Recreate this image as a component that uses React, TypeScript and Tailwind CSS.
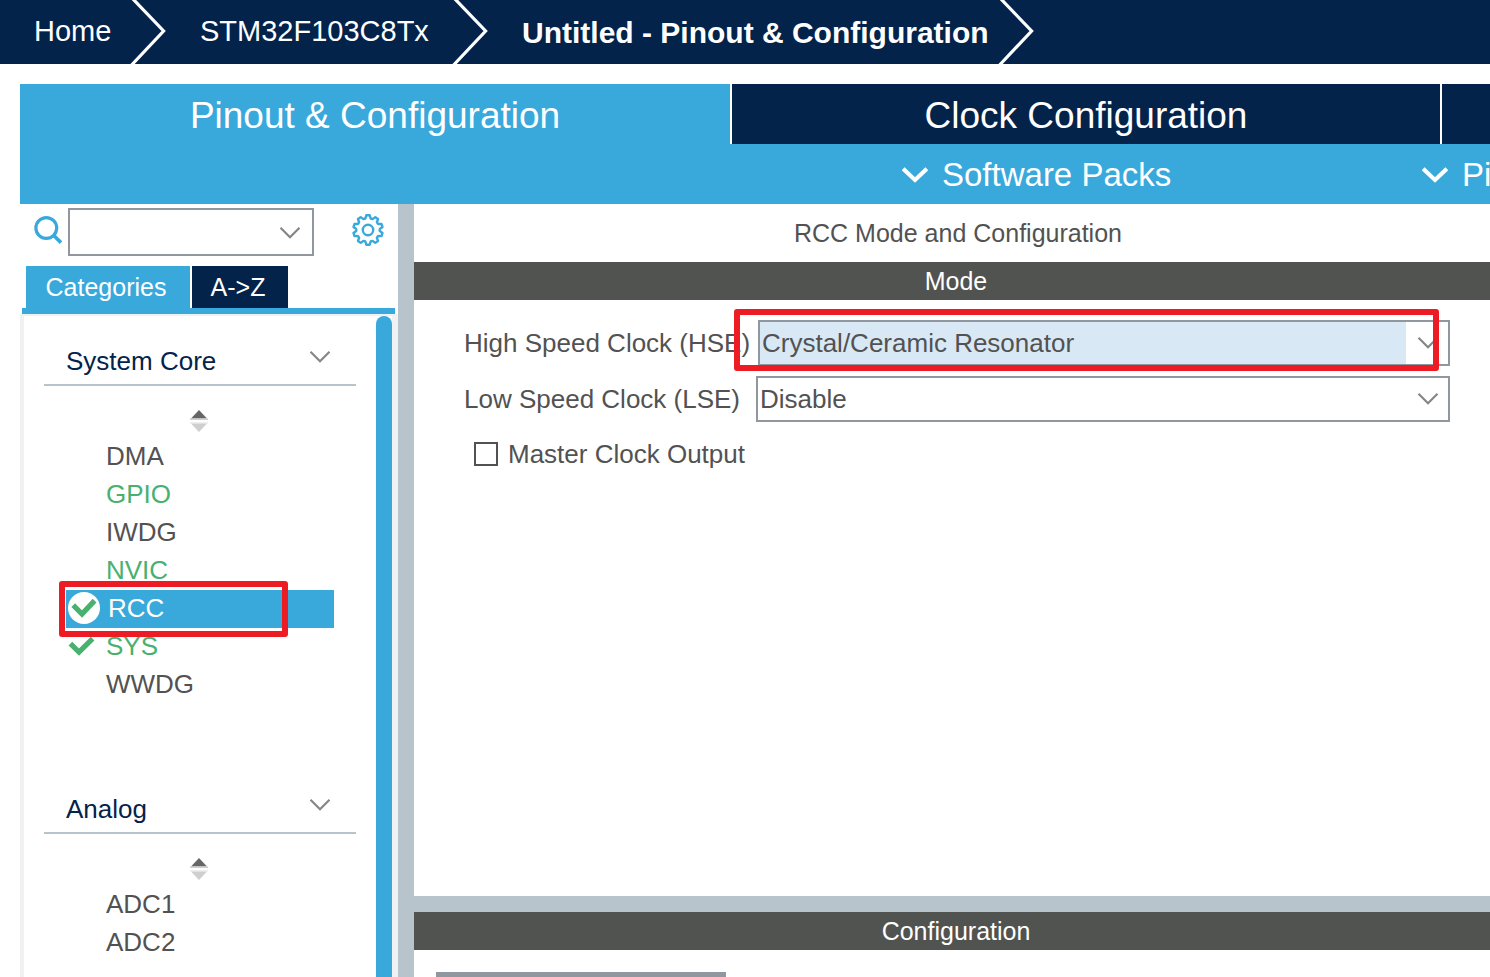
import type { ReactNode } from "react";

const GEAR_TEETH = 10;

function gearPath(center: number, outer: number, inner: number) {
  const step = (Math.PI * 2) / GEAR_TEETH;
  const at = (radius: number, angle: number) =>
    `${(center + radius * Math.sin(angle)).toFixed(2)} ${(center - radius * Math.cos(angle)).toFixed(2)}`;
  const points: string[] = [];
  for (let i = 0; i < GEAR_TEETH; i += 1) {
    const a = i * step;
    points.push(
      at(outer, a - step * 0.18),
      at(outer, a + step * 0.18),
      at(inner, a + step * 0.36),
      at(inner, a + step * 0.64),
    );
  }
  return `M${points.join("L")}Z`;
}

function GearIcon() {
  return (
    <svg width="32" height="32" viewBox="0 0 32 32" fill="none" stroke="#39a9dc" strokeWidth="2.4" strokeLinejoin="round" aria-hidden="true">
      <path d={gearPath(16, 14.8, 11.8)} />
      <circle cx="16" cy="16" r="5.2" />
    </svg>
  );
}

function SearchIcon() {
  return (
    <svg width="28" height="28" viewBox="0 0 28 28" fill="none" stroke="#39a9dc" aria-hidden="true">
      <circle cx="12.3" cy="12" r="10.4" strokeWidth="3.2" />
      <path d="M19 18.8L27 26.6" strokeWidth="3.6" />
    </svg>
  );
}

function ThinChevron({ className = "" }: { className?: string }) {
  return (
    <svg className={className} width="20" height="12" viewBox="0 0 20 12" fill="none" stroke="#868686" strokeWidth="2.2" aria-hidden="true">
      <path d="M0.5 0.8L10 10.3L19.5 0.8" />
    </svg>
  );
}

function BoldChevron() {
  return (
    <svg width="26" height="16" viewBox="0 0 26 16" fill="none" stroke="#fff" strokeWidth="4" aria-hidden="true">
      <path d="M1.2 1.8L13 13L24.8 1.8" />
    </svg>
  );
}

function SortIcon() {
  return (
    <svg width="18" height="22" viewBox="0 0 18 22" aria-hidden="true">
      <path d="M9 0L17 8.4H1Z" fill="#666" />
      <path d="M0 8.4h18v1.6H0Z" fill="#cfcfcf" />
      <path d="M0 12.2h18v1.4H0Z" fill="#ececec" />
      <path d="M1 13.6h16L9 22Z" fill="#cfcfcf" />
    </svg>
  );
}

function CheckMark({ disc = false }: { disc?: boolean }) {
  return (
    <svg width="32" height="32" viewBox="0 0 32 32" fill="none" aria-hidden="true">
      {disc && <circle cx="16" cy="16" r="16" fill="#fff" />}
      <path
        d={disc ? "M5.2 13.2L14 22L26.6 8.6" : "M2.4 13.6L11 22L24.6 8.6"}
        stroke="#49b170"
        strokeWidth="5.2"
      />
    </svg>
  );
}

function CrumbArrow() {
  return (
    <svg width="36" height="64" viewBox="0 0 36 64" fill="none" stroke="#fff" strokeWidth="3.2" aria-hidden="true">
      <path d="M2 -2L33.6 31L1.6 65" />
    </svg>
  );
}

function Crumb({ className, children }: { className: string; children: ReactNode }) {
  return (
    <li className={`flex shrink-0 items-center justify-between pl-[34px] ${className}`}>
      <a href="#" className="whitespace-nowrap">
        {children}
      </a>
      <CrumbArrow />
    </li>
  );
}

type Peripheral = { name: string; state?: "used" | "checked" | "selected" };

const SYSTEM_CORE: Peripheral[] = [
  { name: "DMA" },
  { name: "GPIO", state: "used" },
  { name: "IWDG" },
  { name: "NVIC", state: "used" },
  { name: "RCC", state: "selected" },
  { name: "SYS", state: "checked" },
  { name: "WWDG" },
];

const ANALOG: Peripheral[] = [{ name: "ADC1" }, { name: "ADC2" }];

function PeripheralRow({ name, state }: Peripheral) {
  const selected = state === "selected";
  const tone = selected
    ? "gap-2 bg-[#39a9dc] text-white"
    : state
      ? "gap-[6px] text-[#49b170]"
      : "gap-[6px] text-[#525252]";
  return (
    <li className="relative">
      <button type="button" className={`flex h-[38px] w-[268px] items-center pb-[2px] pl-[2px] text-left ${tone}`}>
        <span className="flex w-8 shrink-0">
          {(selected || state === "checked") && <CheckMark disc={selected} />}
        </span>
        {name}
      </button>
      {selected && (
        <span className="pointer-events-none absolute -top-[9px] -left-[7px] z-10 h-14 w-[229px] rounded-[3px] border-6 border-[#ed1c24]" />
      )}
    </li>
  );
}

function Category({ title, items }: { title: string; items: Peripheral[] }) {
  return (
    <section className="flex min-h-[448px] flex-col">
      <h2 className="mr-5 ml-5 border-b-2 border-[#b8c4cb]">
        <button type="button" className="flex h-[68px] w-full items-center justify-between pt-[22px] pr-[26px] pl-[22px] text-[#03234b]">
          {title}
          <ThinChevron className="mb-2" />
        </button>
      </h2>
      <button type="button" aria-label={`Sort ${title}`} className="mt-6 mb-[6px] ml-[166px] self-start">
        <SortIcon />
      </button>
      <ul className="ml-[42px]">
        {items.map((item) => (
          <PeripheralRow key={item.name} {...item} />
        ))}
      </ul>
    </section>
  );
}

function Sidebar() {
  return (
    <aside className="flex w-[378px] shrink-0 flex-col text-[26px] leading-[38px]">
      <div className="flex items-center pt-1 pl-[14px]">
        <label htmlFor="search" className="mb-1">
          <SearchIcon />
        </label>
        <div className="relative ml-[6px]">
          <select id="search" aria-label="Search" className="block h-12 w-[246px] appearance-none border-2 border-[#90979e] bg-white pr-12 pl-1" />
          <ThinChevron className="pointer-events-none absolute top-[19px] right-[14px]" />
        </div>
        <button type="button" aria-label="Settings" className="mb-1 ml-[38px]">
          <GearIcon />
        </button>
      </div>
      <div className="mt-[10px] flex gap-[2px] pl-[6px] text-[25px] text-white">
        <button type="button" className="h-[42px] w-[164px] bg-[#39a9dc] pr-1">
          Categories
        </button>
        <button type="button" className="h-[42px] w-24 bg-[#03234b] pr-1">
          A-&gt;Z
        </button>
      </div>
      <div className="mr-[3px] ml-[2px] h-[6px] shrink-0 bg-[#39a9dc]" />
      <div className="flex min-h-0 flex-1 border-t-2 border-r-6 border-l-4 border-[#f0f1f3]">
        <div className="min-w-0 flex-1 overflow-hidden">
          <Category title="System Core" items={SYSTEM_CORE} />
          <Category title="Analog" items={ANALOG} />
        </div>
        <div className="w-4 rounded-t-full bg-[#39a9dc]" />
      </div>
    </aside>
  );
}

function ClockField({ id, label, value, active = false }: { id: string; label: string; value: string; active?: boolean }) {
  const fill = active
    ? "bg-[linear-gradient(to_right,#d9e8f5_calc(100%-42px),#fff_0)]"
    : "bg-white";
  return (
    <div className="grid grid-cols-[292px_1fr] items-center">
      <label htmlFor={id} className="whitespace-nowrap">
        {label}
      </label>
      <div className={`relative ${active ? "ml-[2px]" : ""}`}>
        <select id={id} defaultValue={value} className={`block h-[46px] w-full appearance-none border-2 border-[#90979e] pr-12 pl-[2px] ${fill}`}>
          <option>{value}</option>
        </select>
        <ThinChevron className="pointer-events-none absolute top-[17px] right-3" />
        {active && (
          <span className="pointer-events-none absolute -top-[11px] right-[11px] -bottom-[5px] -left-6 rounded-[3px] border-6 border-[#ed1c24]" />
        )}
      </div>
    </div>
  );
}

function PanelBar({ children }: { children: ReactNode }) {
  return (
    <h2 className="h-[38px] shrink-0 bg-[#515350] pl-2 text-center text-[25px] leading-[38px] text-white">
      {children}
    </h2>
  );
}

function RccPanel() {
  return (
    <main className="flex min-w-0 flex-1 flex-col border-l-16 border-[#b8c4cb] text-[26px] text-[#525252]">
      <h1 className="h-[58px] shrink-0 pl-3 text-center text-[25px] leading-[58px]">
        RCC Mode and Configuration
      </h1>
      <PanelBar>Mode</PanelBar>
      <form className="flex flex-1 flex-col gap-[10px] pt-5 pr-10 pl-[50px]">
        <ClockField id="hse" label="High Speed Clock (HSE)" value="Crystal/Ceramic Resonator" active />
        <ClockField id="lse" label="Low Speed Clock (LSE)" value="Disable" />
        <label className="flex h-11 items-center gap-[10px] pl-[10px]">
          <input type="checkbox" className="size-6 appearance-none border-2 border-[#525252] checked:bg-[#39a9dc]" />
          Master Clock Output
        </label>
      </form>
      <div className="h-4 shrink-0 bg-[#b8c4cb]" />
      <PanelBar>Configuration</PanelBar>
      <div className="h-[27px] shrink-0 pt-[22px] pl-[22px]">
        <div className="h-full w-[290px] bg-[#90979e]" />
      </div>
    </main>
  );
}

export default function App() {
  return (
    <div className="flex h-screen flex-col overflow-hidden bg-white font-['Liberation_Sans',Arial,sans-serif]">
      <nav aria-label="Breadcrumb" className="h-16 shrink-0 overflow-hidden bg-[#03234b] text-[29px] text-white">
        <ol className="flex">
          <Crumb className="w-[166px]">Home</Crumb>
          <Crumb className="w-[322px]">STM32F103C8Tx</Crumb>
          <Crumb className="w-[546px] text-[30px] font-bold">Untitled - Pinout &amp; Configuration</Crumb>
        </ol>
      </nav>
      <div className="mt-5 ml-5 flex min-h-0 flex-1 flex-col">
        <div className="grid h-[60px] shrink-0 grid-cols-[710fr_708fr_48fr] gap-[2px] text-[37px] leading-[56px] text-white">
          <button type="button" className="bg-[#39a9dc] pt-[3px]">
            Pinout &amp; Configuration
          </button>
          <button type="button" className="bg-[#03234b] pt-[3px]">
            Clock Configuration
          </button>
          <button type="button" aria-label="Project Manager" className="bg-[#03234b]" />
        </div>
        <div className="grid h-[60px] shrink-0 grid-cols-[882fr_520fr_68fr] overflow-hidden bg-[#39a9dc] pt-[2px] text-[33px] text-white">
          <button type="button" className="col-start-2 flex min-w-0 items-center gap-[14px] whitespace-nowrap">
            <BoldChevron />
            Software Packs
          </button>
          <button type="button" className="flex min-w-0 items-center gap-[14px] overflow-hidden whitespace-nowrap">
            <span className="shrink-0">
              <BoldChevron />
            </span>
            Pinout
          </button>
        </div>
        <div className="flex min-h-0 flex-1">
          <Sidebar />
          <RccPanel />
        </div>
      </div>
    </div>
  );
}
